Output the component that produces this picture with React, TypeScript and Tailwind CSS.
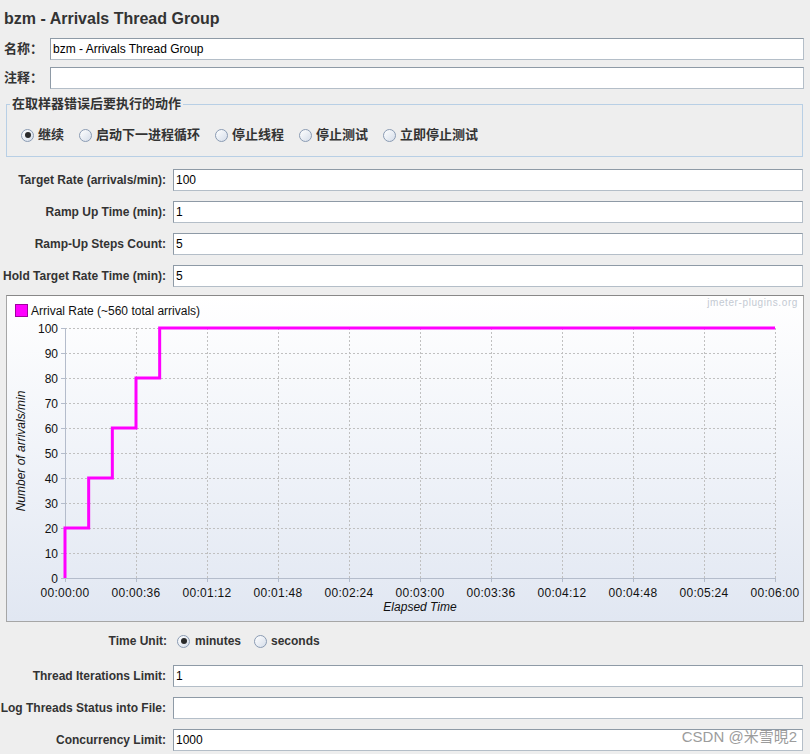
import React from 'react';

const FONT = { fontFamily: '"Liberation Sans", Arial, "Noto Sans CJK SC", sans-serif' };

function Radio({ checked }: { checked?: boolean }) {
  return (
    <span className="w-[13px] h-[13px] rounded-full border border-[#8a9bb3] bg-linear-to-br from-white to-[#d5dde9] flex items-center justify-center shrink-0">
      {checked && <span className="w-[6px] h-[6px] rounded-full bg-[#2a2a2a]" />}
    </span>
  );
}

function Field({ value }: { value?: string }) {
  return (
    <div className="flex-1 h-[22px] bg-white border border-[#8e9aa6] border-b-[#b4bec8] border-r-[#b4bec8] flex items-center px-[2px] text-[12px] text-black">
      {value}
    </div>
  );
}

function ParamRow({ label, value, className = '' }: { label: string; value?: string; className?: string }) {
  return (
    <div className={`flex items-center pr-[7px] ${className}`}>
      <div className="w-[167px] text-right text-[12px] font-bold text-[#333] whitespace-nowrap pr-[1px]">{label}</div>
      <div className="w-[6px]" />
      <Field value={value} />
    </div>
  );
}

const X0 = 65, X1 = 775, Y0 = 578, Y100 = 328;
const xLabels = ['00:00:00', '00:00:36', '00:01:12', '00:01:48', '00:02:24', '00:03:00', '00:03:36', '00:04:12', '00:04:48', '00:05:24', '00:06:00'];

function Chart() {
  const xs = xLabels.map((_, i) => X0 + (i * (X1 - X0)) / 10);
  const ys = Array.from({ length: 11 }, (_, i) => i * 10);
  const yOf = (v: number) => Y0 - (v * (Y0 - Y100)) / 100;
  const step = (X1 - X0) / 30; // 12 seconds
  const path = `M${X0},${Y0} V${yOf(20)} H${X0 + step} V${yOf(40)} H${X0 + 2 * step} V${yOf(60)} H${X0 + 3 * step} V${yOf(80)} H${X0 + 4 * step} V${yOf(100)} H${X1}`;
  return (
    <svg width="797" height="326" className="block">
      <g transform="translate(-7,-296)" fontFamily='"Liberation Sans", Arial, sans-serif'>
        <rect x="15.5" y="304.5" width="12" height="12" fill="#ff00ff" stroke="#a000a0" />
        <text x="31" y="315" fontSize="12" fill="#111">Arrival Rate (~560 total arrivals)</text>
        <text x="798" y="306" fontSize="10" fill="#c4cad3" textAnchor="end" letterSpacing="0.6">jmeter-plugins.org</text>

        {ys.slice(1).map(v => (
          <line key={v} x1={X0} x2={X1} y1={yOf(v) + 0.5} y2={yOf(v) + 0.5} stroke="#c0c0c0" strokeDasharray="2 2" />
        ))}
        {xs.slice(1).map(x => (
          <line key={x} x1={Math.round(x) + 0.5} x2={Math.round(x) + 0.5} y1={Y100} y2={Y0} stroke="#c0c0c0" strokeDasharray="2 2" />
        ))}
        <line x1={X0 + 0.5} x2={X0 + 0.5} y1={Y100} y2={Y0 + 4} stroke="#b4bccb" />
        <line x1={X0 - 4} x2={X1} y1={Y0 + 0.5} y2={Y0 + 0.5} stroke="#b4bccb" />
        {ys.map(v => (
          <g key={v}>
            <line x1={X0 - 4} x2={X0} y1={yOf(v) + 0.5} y2={yOf(v) + 0.5} stroke="#b4bccb" />
            <text x={58} y={yOf(v) + 4.5} fontSize="12" textAnchor="end" fill="#111">{v}</text>
          </g>
        ))}
        {xs.map((x, i) => (
          <g key={i}>
            <line x1={Math.round(x) + 0.5} x2={Math.round(x) + 0.5} y1={Y0} y2={Y0 + 4} stroke="#b4bccb" />
            <text x={x} y={597} fontSize="12" textAnchor="middle" fill="#111" letterSpacing="0.3">{xLabels[i]}</text>
          </g>
        ))}
        <text x="420" y="611" fontSize="12" fontStyle="italic" textAnchor="middle" fill="#111">Elapsed Time</text>
        <text x="0" y="0" fontSize="12" fontStyle="italic" textAnchor="middle" fill="#111" transform="translate(25,451) rotate(-90)">Number of arrivals/min</text>

        <path d={path} fill="none" stroke="#ff00ff" strokeWidth="3" />
      </g>
    </svg>
  );
}

export default function App() {
  return (
    <div className="w-[810px] h-[754px] bg-[#eeeeee] relative overflow-hidden text-[#333]" style={FONT}>
      <div className="pl-[4px] pt-[9px] text-[16px] leading-[20px] font-bold text-[#333]">bzm - Arrivals Thread Group</div>

      <div className="flex items-center mt-[9px] pl-[4px] pr-[6px]">
        <div className="w-[46px] text-[13px] font-bold text-[#333]">名称：</div>
        <Field value="bzm - Arrivals Thread Group" />
      </div>
      <div className="flex items-center mt-[7px] pl-[4px] pr-[6px]">
        <div className="w-[46px] text-[13px] font-bold text-[#333]">注释：</div>
        <Field />
      </div>

      <fieldset className="mt-[7px] ml-[6px] mr-[7px] border border-[#b8cfe5] pl-[14px] pt-[15px] pb-[13px]">
        <legend className="ml-[-11px] px-[2px] text-[13px] leading-[16px] font-bold text-[#333]">在取样器错误后要执行的动作</legend>
        <div className="flex items-center text-[13px] leading-[16px] font-bold text-[#333]">
          {[
            ['继续', true],
            ['启动下一进程循环', false],
            ['停止线程', false],
            ['停止测试', false],
            ['立即停止测试', false],
          ].map(([t, c]) => (
            <div key={t as string} className="flex items-center gap-[4px] mr-[15px]">
              <Radio checked={c as boolean} />
              <span>{t as string}</span>
            </div>
          ))}
        </div>
      </fieldset>

      <ParamRow className="mt-[12px]" label="Target Rate (arrivals/min):" value="100" />
      <ParamRow className="mt-[10px]" label="Ramp Up Time (min):" value="1" />
      <ParamRow className="mt-[10px]" label="Ramp-Up Steps Count:" value="5" />
      <ParamRow className="mt-[10px]" label="Hold Target Rate Time (min):" value="5" />

      <div className="mt-[8px] ml-[6px] mr-[6px] h-[327px] border border-[#a6a6a6] border-t-[#888888] bg-linear-to-b from-white to-[#e1e7f2]">
        <Chart />
      </div>

      <div className="flex items-center mt-[11px] h-[16px]">
        <div className="w-[167px] text-right text-[12px] font-bold text-[#333]">Time Unit:</div>
        <div className="flex items-center ml-[10px] text-[12px] font-bold text-[#333]">
          <Radio checked />
          <span className="ml-[5px]">minutes</span>
          <span className="ml-[13px]"><Radio /></span>
          <span className="ml-[4px]">seconds</span>
        </div>
      </div>

      <ParamRow className="mt-[16px]" label="Thread Iterations Limit:" value="1" />
      <ParamRow className="mt-[10px]" label="Log Threads Status into File:" />
      <ParamRow className="mt-[10px]" label="Concurrency Limit:" value="1000" />

      <div className="absolute right-[13px] top-[727px] text-[15px] leading-[20px] text-[#9c9c9c] pointer-events-none">
        CSDN @米雪晛2
      </div>
    </div>
  );
}
